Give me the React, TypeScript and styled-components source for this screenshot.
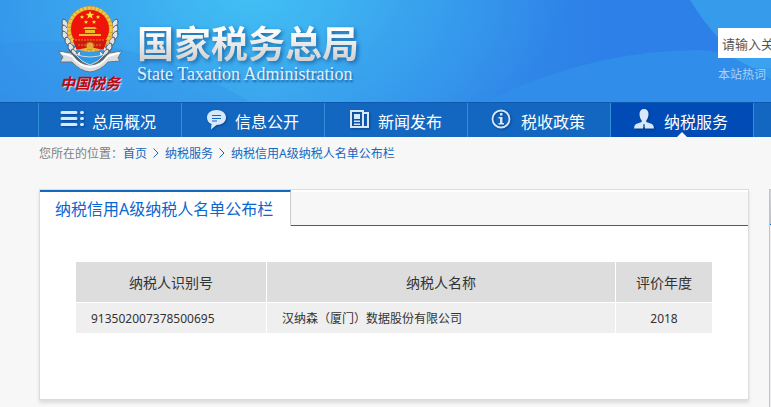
import React from "react";
import styled, { createGlobalStyle } from "styled-components";

const Global = createGlobalStyle`
  * { box-sizing: border-box; }
  body {
    margin: 0;
    background: #f7f7f7;
    color: #333;
    font-family: "Noto Sans", "Noto Sans CJK SC", sans-serif;
    font-size: 12px;
    overflow-x: hidden;
  }
  a { text-decoration: none; }
`;

const Page = styled.div`
  min-height: 100vh;
  display: flex;
  flex-direction: column;
`;

const Header = styled.header`
  position: relative;
  height: 102px;
  padding-left: 55px;
  display: flex;
  overflow: hidden;
  background: #3494ea;
`;

const Backdrop = styled.svg`
  position: absolute;
  inset: 0;
  width: 100%;
  height: 100%;
`;

const Brand = styled.a`
  position: relative;
  display: flex;
  gap: 12px;
  color: #fff;
`;

const EmblemColumn = styled.div`
  width: 70px;
  display: flex;
  flex-direction: column;
  align-items: center;
  padding-top: 4px;
`;

const Motto = styled.span`
  color: #c4060c;
  font-family: "Noto Sans CJK SC", sans-serif;
  font-size: 15px;
  font-weight: 700;
  font-style: italic;
  line-height: 18px;
  text-shadow: 1px 1px 1px #d8e8f4;
`;

const Titles = styled.div`
  display: flex;
  flex-direction: column;
  padding-top: 22px;
`;

const Title = styled.span`
  font-family: "Noto Sans CJK SC", sans-serif;
  font-size: 37px;
  font-weight: 700;
  line-height: 40px;
  background: linear-gradient(#fff 20%, #d4d4d4 90%);
  background-clip: text;
  color: transparent;
  filter: drop-shadow(2px 2px 2px rgba(0, 50, 110, 0.55));
`;

const Subtitle = styled.span`
  font-family: "Liberation Serif", serif;
  font-size: 18px;
  line-height: 24px;
  color: #e6eef5;
  text-shadow: 1px 2px 2px rgba(0, 50, 110, 0.6);
`;

const Search = styled.form`
  position: relative;
  margin-left: auto;
  width: 53px;
  padding-top: 28px;
  flex: none;
`;

const SearchInput = styled.input`
  display: block;
  width: 100%;
  height: 30px;
  border: 0;
  border-radius: 0;
  padding: 0 0 0 4px;
  background: #fff;
  font: 13px "Noto Sans CJK SC", sans-serif;
  &::placeholder { color: #555; opacity: 1; }
`;

const HotWords = styled.label`
  display: block;
  padding-top: 8px;
  line-height: 18px;
  color: #a9d0f7;
  white-space: nowrap;
`;

const Nav = styled.nav`
  display: flex;
  height: 35px;
  padding-left: 38px;
  background: #1367c0;
  border-top: 1px solid #0e58ae;
  overflow: hidden;
`;

const NavItem = styled.a<{ $active?: boolean }>`
  position: relative;
  flex: 0 0 143px;
  display: flex;
  align-items: center;
  gap: 8px;
  padding-left: 21px;
  border-left: 1px solid #3190d8;
  background: ${(p) => (p.$active ? "#004bb5" : "transparent")};
  color: #fff;
  font-size: 16px;
  line-height: 20px;
  white-space: nowrap;
`;

const NavLabel = styled.span`
  padding-top: 4px;
`;

const NavIcon = styled.svg`
  width: 24px;
  height: 24px;
  flex: none;
  filter: drop-shadow(1px 1px 1px rgba(0, 30, 90, 0.5));
`;

const Pointer = styled.i`
  position: absolute;
  bottom: 0;
  left: 50%;
  transform: translateX(-50%);
  border: 5px solid transparent;
  border-top-width: 0;
  border-bottom-color: #f7f7f7;
`;

const NavEnd = styled.span`
  flex: 1 0 0;
  border-left: 1px solid #3190d8;
`;

const Crumbs = styled.nav`
  display: flex;
  align-items: center;
  height: 32px;
  padding-left: 39px;
  color: #808080;
  white-space: nowrap;
`;

const CrumbLink = styled.a`
  color: #1368c1;
`;

const Chevron = styled.svg`
  width: 6px;
  height: 10px;
  margin: 0 6px;
`;

const Columns = styled.div`
  flex: 1;
  display: grid;
  grid-template-columns: minmax(0, 1fr) 2px;
  gap: 20px;
  padding: 20px 0 0 39px;
`;

const Panel = styled.main`
  align-self: start;
  min-height: 211px;
  background: #fff;
  border: 1px solid #dcdcdc;
  box-shadow: 0 3px 3px #dedede;
  margin-bottom: 7px;
`;

const TabBar = styled.div`
  display: flex;
  height: 36px;
`;

const Tab = styled.h1`
  margin: 0;
  padding: 0 17px 0 15px;
  border-top: 2px solid #1368c1;
  border-right: 1px solid #ccc;
  color: #0a66d0;
  font-size: 16px;
  font-weight: 400;
  line-height: 34px;
  white-space: nowrap;
`;

const TabRest = styled.div`
  flex: 1;
  border-top: 2px solid #fff;
  border-bottom: 1px solid #1368c1;
  background: #f7f7f7;
`;

const TableWrap = styled.div`
  padding: 36px 36px 66px;
`;

const Table = styled.table`
  width: 100%;
  border-collapse: separate;
  border-spacing: 0;
  table-layout: fixed;
`;

const Head = styled.th<{ $width?: string }>`
  width: ${(p) => p.$width ?? "auto"};
  height: 41px;
  padding: 0;
  background: #ddd;
  border-bottom: 1px solid #fff;
  font-size: 14px;
  font-weight: 400;
  & + & { border-left: 1px solid #fff; }
`;

const Cell = styled.td<{ $center?: boolean }>`
  height: 30px;
  padding: 2px ${(p) => (p.$center ? "0" : "15px")} 0;
  background: #efefef;
  line-height: 18px;
  text-align: ${(p) => (p.$center ? "center" : "left")};
  & + & { border-left: 1px solid #fff; }
`;

const Aside = styled.aside`
  border-left: 1px solid #c2c2ca;
  border-top: 1px solid #c2c2ca;
  background: #eeeef4;
`;

const AsideHead = styled.div`
  height: 35px;
  background: linear-gradient(#d6d6dc, #bdbdc8);
  border-bottom: 1px solid #1368c1;
`;

const laurel = [0, 1, 2, 3, 4, 5];

function Emblem() {
  return (
    <svg width="64" height="70" viewBox="0 0 64 70" aria-hidden="true">
      {[1, -1].map((side) => (
        <g key={side} transform={side === 1 ? undefined : "translate(64 0) scale(-1 1)"}>
          {laurel.map((i) => (
            <g key={i} transform={`translate(${4 + Math.max(0, i - 2) * 3} ${17 + i * 6})`}>
              <path d="M6 7C0 6-1 2 1-2 5-1 7 3 6 7Z" fill="#dfe3e6" stroke="#495762" strokeWidth="1" />
              <path d="M5 8C9 6 10 3 9 0 6 2 5 5 5 8Z" fill="#fff" stroke="#606a72" strokeWidth=".8" />
            </g>
          ))}
        </g>
      ))}
      <path d="M10 44Q32 70 54 44L50 55 32 66 14 55Z" fill="#59636d" />
      <path d="M0 47 13 49Q19 60 32 61 45 60 51 49L64 47 60 54 62 57 50 58Q42 67 32 68 22 67 14 58L2 58 5 53Z" fill="#d9dde0" stroke="#69737b" />
      <path d="M3 49 14 52Q22 63 32 63 42 63 50 52L61 49" fill="none" stroke="#fff" strokeWidth="2" />
      <path d="M17 50Q32 56 47 50L40 57 32 61 24 57Z" fill="#2c9ae2" stroke="#d5d8da" />
      <circle cx="32" cy="25" r="23" fill="#d89a28" />
      <circle cx="32" cy="25" r="21" fill="none" stroke="#f0c848" strokeWidth="3" strokeDasharray="3 1" />
      <circle cx="32" cy="25" r="19" fill="#ee1409" />
      <path d="m32 7 1.2 2.7 3 .2-2.3 1.9.8 2.9-2.7-1.6-2.7 1.6.8-2.9-2.3-1.9 3-.2Z" fill="#ffe13a" />
      {[[24, 13], [28, 18], [36, 18], [40, 13]].map(([x, y]) => (
        <path key={x} transform={`translate(${x} ${y})`} d="m0-2 .6 1.3 1.5.1-1.1 1 .3 1.4L0 1.1l-1.3.7.3-1.4-1.1-1 1.5-.1Z" fill="#ffe13a" />
      ))}
      <path d="M25 25 27 23H37L39 25ZM27 26H37V29H27ZM21 30H43V32H21Z" fill="#f2b72f" />
      <path d="M15 36H49L46 45H18Z" fill="#d01712" />
      <path d="M17 36H47M20 41H44" stroke="#e8871e" strokeDasharray="2 1" />
      <circle cx="32" cy="42" r="4" fill="#e9a73a" stroke="#b85e18" />
      <path d="M23 46Q32 43 41 46" fill="none" stroke="#e8b331" strokeWidth="2" />
    </svg>
  );
}

const ink = "#d6e8fa";

const icons = {
  list: (
    <path
      d="M2 4.5H16M2 10.5H16M2 16.5H16M21.500 4.5H22.500M21.500 10.5H22.500M21.500 16.5H22.500"
      stroke={ink} strokeWidth="3" strokeLinecap="round" fill="none"
    />
  ),
  chat: (
    <>
      <path d="M13.500 2C19 2 23 5 23 9.500S19 17 13.500 17L8 21.500 8.500 16C5.500 14.800 4 12.500 4 9.500 4 5 8 2 13.500 2Z" fill={ink} />
      <path d="M9 7.500H18M9 10.500H18M9 13H14" stroke="#1367c0" strokeWidth="1.200" />
    </>
  ),
  news: (
    <>
      <path d="M5 3H17V19H5ZM17 5H22V19H17" fill="none" stroke={ink} strokeWidth="2" />
      <path d="M8 6H14V11H8ZM8 12.500H14V14H8ZM8 15.500H14V17H8Z" fill={ink} />
    </>
  ),
  info: (
    <>
      <circle cx="12" cy="11" r="8.500" fill="none" stroke={ink} strokeWidth="1.800" />
      <path d="M11 5H13.500V7.500H11ZM9.500 9H13.500V15H15V16.500H9.500V15H11V10.500H9.500Z" fill={ink} />
    </>
  ),
  person: (
    <path
      d="M12 1C15 1 16.500 3 16.500 6 16.500 9 15.500 11 14.300 12.500V14L20 16Q22 17 22 20.500H2Q2 17 4 16L9.700 14V12.500C8.500 11 7.500 9 7.500 6 7.500 3 9 1 12 1ZM11 16.500 11.500 18 11 20.500H13L12.500 18 13 16.500Z"
      fill={ink} fillRule="evenodd"
    />
  ),
};

const navItems: { label: string; icon: keyof typeof icons; active?: boolean }[] = [
  { label: "总局概况", icon: "list" },
  { label: "信息公开", icon: "chat" },
  { label: "新闻发布", icon: "news" },
  { label: "税收政策", icon: "info" },
  { label: "纳税服务", icon: "person", active: true },
];

const crumbs = ["首页", "纳税服务", "纳税信用A级纳税人名单公布栏"];

export default function App() {
  return (
    <Page>
      <Global />
      <Header>
        <Backdrop viewBox="0 0 771 102" preserveAspectRatio="none" aria-hidden="true">
          <defs>
            <linearGradient id="sky" x1="0" y1="0" x2="1" y2="0">
              <stop offset="0" stopColor="#3391e9" />
              <stop offset=".35" stopColor="#389eec" />
              <stop offset=".78" stopColor="#2d80e7" />
              <stop offset="1" stopColor="#2d80e7" />
            </linearGradient>
            <radialGradient id="glow" gradientUnits="userSpaceOnUse" cx="250" cy="-10" r="320" gradientTransform="scale(1 .5)">
              <stop offset="0" stopColor="#43c3f5" stopOpacity=".9" />
              <stop offset=".5" stopColor="#43c3f5" stopOpacity=".35" />
              <stop offset="1" stopColor="#43c3f5" stopOpacity="0" />
            </radialGradient>
          </defs>
          <path d="M0 0H771V102H0Z" fill="url(#sky)" />
          <path d="M0 0H771V102H0Z" fill="url(#glow)" />
          <path d="M0 44Q130 28 250 102H0Z" fill="#318de8" opacity=".3" />
          <path d="M690 0H771V80Q720 50 690 0Z" fill="#379bec" />
          <path d="M485 102Q590 50 700 50 740 52 771 80V102Z" fill="#308dea" />
          <path d="M718 50 771 52V68H753Z" fill="#3aa2ee" />
        </Backdrop>
        <Brand href="#">
          <EmblemColumn>
            <Emblem />
            <Motto>中国税务</Motto>
          </EmblemColumn>
          <Titles>
            <Title>国家税务总局</Title>
            <Subtitle>State Taxation Administration</Subtitle>
          </Titles>
        </Brand>
        <Search>
          <SearchInput id="keyword" placeholder="请输入关" />
          <HotWords htmlFor="keyword">本站热词</HotWords>
        </Search>
      </Header>
      <Nav>
        {navItems.map((item) => (
          <NavItem key={item.label} href="#" $active={item.active}>
            <NavIcon viewBox="0 0 24 24" aria-hidden="true">{icons[item.icon]}</NavIcon>
            <NavLabel>{item.label}</NavLabel>
            {item.active && <Pointer />}
          </NavItem>
        ))}
        <NavEnd />
      </Nav>
      <Crumbs>
        <span>您所在的位置：</span>
        {crumbs.map((crumb, i) => (
          <React.Fragment key={crumb}>
            {i > 0 && (
              <Chevron viewBox="0 0 6 10" aria-hidden="true">
                <path d="M.5.5 5 5 .5 9.500" fill="none" stroke="#1368c1" />
              </Chevron>
            )}
            <CrumbLink href="#">{crumb}</CrumbLink>
          </React.Fragment>
        ))}
      </Crumbs>
      <Columns>
        <Panel>
          <TabBar>
            <Tab>纳税信用A级纳税人名单公布栏</Tab>
            <TabRest />
          </TabBar>
          <TableWrap>
            <Table>
              <thead>
                <tr>
                  <Head $width="190px">纳税人识别号</Head>
                  <Head>纳税人名称</Head>
                  <Head $width="97px">评价年度</Head>
                </tr>
              </thead>
              <tbody>
                <tr>
                  <Cell>913502007378500695</Cell>
                  <Cell>汉纳森（厦门）数据股份有限公司</Cell>
                  <Cell $center>2018</Cell>
                </tr>
              </tbody>
            </Table>
          </TableWrap>
        </Panel>
        <Aside>
          <AsideHead />
        </Aside>
      </Columns>
    </Page>
  );
}
